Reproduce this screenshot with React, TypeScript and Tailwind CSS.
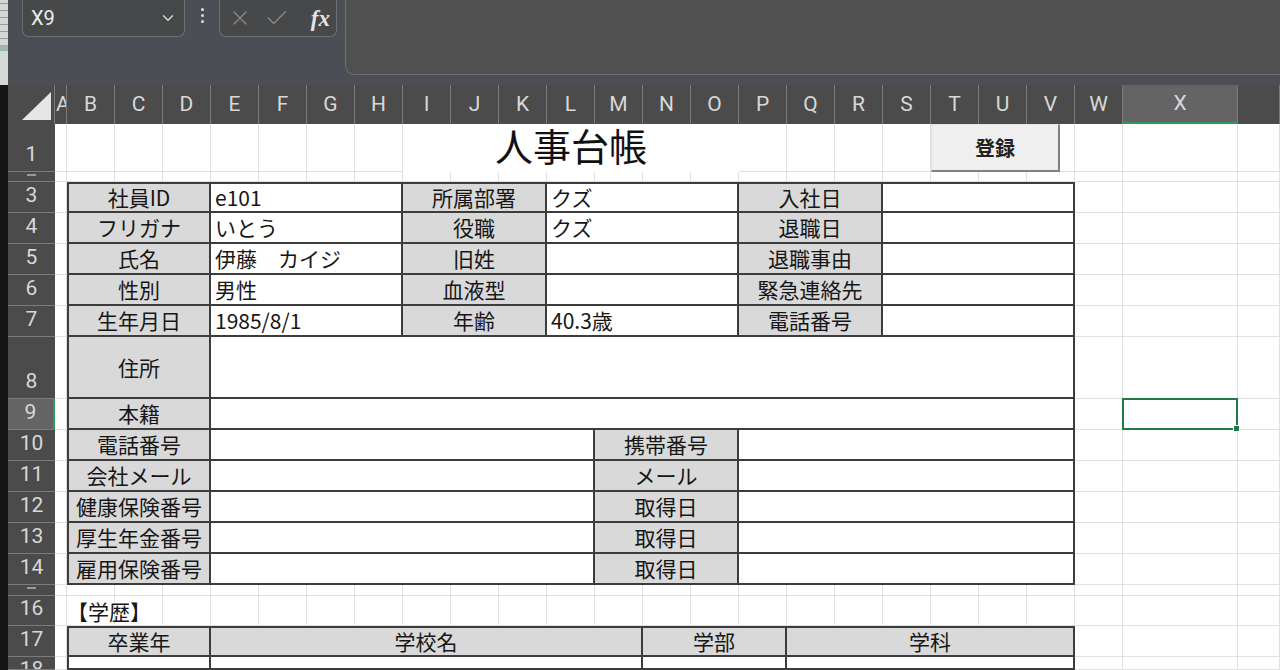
import React from 'react';
import { X, Check, ChevronDown } from 'lucide-react';

// column letters, grid column index = position + 2 (column 1 is the row header)
const COLS = ['A', 'B', 'C', 'D', 'E', 'F', 'G', 'H', 'I', 'J', 'K', 'L', 'M', 'N', 'O', 'P', 'Q', 'R', 'S', 'T', 'U', 'V', 'W', 'X', ''];
const ROWS = Array.from({ length: 18 }, (_, i) => i + 1);

type Cell = { r: number; c: number; span: number; text?: string; label?: boolean };

const topRows = [
    ['社員ID', 'e101', '所属部署', 'クズ', '入社日', ''],
    ['フリガナ', 'いとう', '役職', 'クズ', '退職日', ''],
    ['氏名', '伊藤　カイジ', '旧姓', '', '退職事由', ''],
    ['性別', '男性', '血液型', '', '緊急連絡先', ''],
    ['生年月日', '1985/8/1', '年齢', '40.3歳', '電話番号', ''],
];

const contactRows = [
    ['電話番号', '携帯番号'],
    ['会社メール', 'メール'],
    ['健康保険番号', '取得日'],
    ['厚生年金番号', '取得日'],
    ['雇用保険番号', '取得日'],
];

const buildCells = (): Cell[] => {
    const cells: Cell[] = [];
    topRows.forEach((row, i) => {
        const r = 3 + i;
        cells.push({ r, c: 3, span: 3, text: row[0], label: true });
        cells.push({ r, c: 6, span: 4, text: row[1] });
        cells.push({ r, c: 10, span: 3, text: row[2], label: true });
        cells.push({ r, c: 13, span: 4, text: row[3] });
        cells.push({ r, c: 17, span: 3, text: row[4], label: true });
        cells.push({ r, c: 20, span: 4, text: row[5] });
    });
    cells.push({ r: 8, c: 3, span: 3, text: '住所', label: true });
    cells.push({ r: 8, c: 6, span: 18 });
    cells.push({ r: 9, c: 3, span: 3, text: '本籍', label: true });
    cells.push({ r: 9, c: 6, span: 18 });
    contactRows.forEach((row, i) => {
        const r = 10 + i;
        cells.push({ r, c: 3, span: 3, text: row[0], label: true });
        cells.push({ r, c: 6, span: 8 });
        cells.push({ r, c: 14, span: 3, text: row[1], label: true });
        cells.push({ r, c: 17, span: 7 });
    });
    // 学歴 table
    cells.push({ r: 17, c: 3, span: 3, text: '卒業年', label: true });
    cells.push({ r: 17, c: 6, span: 9, text: '学校名', label: true });
    cells.push({ r: 17, c: 15, span: 3, text: '学部', label: true });
    cells.push({ r: 17, c: 18, span: 6, text: '学科', label: true });
    cells.push({ r: 18, c: 3, span: 3 });
    cells.push({ r: 18, c: 6, span: 9 });
    cells.push({ r: 18, c: 15, span: 3 });
    cells.push({ r: 18, c: 18, span: 6 });
    return cells;
};

const cells = buildCells();

const Toolbar: React.FC = () => (
    <div className="flex h-[85px] shrink-0 items-start bg-[#4b4e54]">
        {/* Name box */}
        <div className="ml-[14px] flex h-[37px] w-[163px] items-center justify-between rounded-b-[7px] border border-t-0 border-[#6d6f73] bg-[#47484a] pl-[8px] pr-[7px]">
            <span className="font-['Roboto',sans-serif] text-[20px] text-[#ededed]">X9</span>
            <ChevronDown size={18} strokeWidth={1.6} className="text-[#e2e2e2]" />
        </div>
        {/* more dots */}
        <div className="flex h-[30px] w-[34px] flex-col items-center justify-center gap-[3px]">
            <span className="h-[3px] w-[3px] rounded-full bg-[#dcdcdc]" />
            <span className="h-[3px] w-[3px] rounded-full bg-[#dcdcdc]" />
            <span className="h-[3px] w-[3px] rounded-full bg-[#dcdcdc]" />
        </div>
        {/* cancel / enter / fx */}
        <div className="flex h-[37px] w-[118px] items-center rounded-b-[7px] border border-t-0 border-[#6d6f73] bg-[#47484a] pl-[8px] pr-[6px]">
            <X size={24} strokeWidth={1.2} className="text-[#8c8c8c]" />
            <Check size={26} strokeWidth={1.2} className="ml-[12px] text-[#8c8c8c]" />
            <span className="ml-auto font-['Liberation_Serif',serif] text-[23px] font-semibold italic leading-none text-[#e4e4e4]">fx</span>
        </div>
        {/* formula input */}
        <div className="ml-[8px] h-[75px] flex-1 rounded-bl-[9px] border-b border-l border-[#6d6f73] bg-[#505050]" />
    </div>
);

const Sheet: React.FC = () => (
    <div className="grid min-h-0 flex-1 grid-cols-[47px_12px_repeat(22,48px)_115px_1fr] grid-rows-[39px_48px_10px_repeat(5,31px)_62px_repeat(6,31px)_11px_30px_31px_1fr] overflow-hidden bg-white font-['Noto_Sans_CJK_JP',sans-serif] text-[21px] text-[#161616]">
        {/* select all corner */}
        <div className="col-start-1 row-start-1 flex items-end justify-end border-r border-[#7b7b7b] bg-[#4b4b4b] pb-[4px] pr-[3px]">
            <svg width="29" height="28" viewBox="0 0 29 28">
                <polygon points="0,28 29,28 29,0" fill="#e6e6e6" />
            </svg>
        </div>

        {/* column headers */}
        {COLS.map((l, i) => (
            <div
                key={i}
                style={{ gridColumn: i + 2, gridRow: 1 }}
                className={`flex items-center overflow-hidden border-r border-[#7b7b7b] font-['Roboto',sans-serif] text-[21px] text-[#d8d8d8] ${l === 'A' ? 'justify-start pl-[1px]' : 'justify-center'} ${l === 'X' ? 'border-b-2 border-b-[#2e9a5a] bg-[#646464]' : 'bg-[#4b4b4b]'}`}
            >
                {l}
            </div>
        ))}

        {/* row headers */}
        {ROWS.map((r) => (
            <div
                key={r}
                style={{ gridColumn: 1, gridRow: r + 1 }}
                className={`flex justify-center overflow-hidden border-b border-[#7b7b7b] font-['Roboto',sans-serif] text-[21px] leading-none text-[#d8d8d8] ${r === 9 ? 'border-r-2 border-r-[#2e9a5a] bg-[#646464]' : 'bg-[#4b4b4b]'} ${r === 2 || r === 15 || r === 18 ? 'items-start pt-[2px]' : 'items-end pb-[6px]'}`}
            >
                {r === 2 || r === 15 ? <span className="h-[2px] w-[9px] bg-[#9a9a9a]" /> : r}
            </div>
        ))}

        {/* base grid lines */}
        {ROWS.map((r) =>
            COLS.map((_, i) => (
                <div
                    key={`${i}-${r}`}
                    style={{ gridColumn: i + 2, gridRow: r + 1 }}
                    className="border-b border-r border-[#e0e0e0]"
                />
            ))
        )}

        {/* title */}
        <div className="col-start-10 col-span-7 row-start-2 flex items-center justify-center bg-white pb-[6px] text-[38px] leading-none text-[#111]">
            人事台帳
        </div>

        {/* register button */}
        <div className="col-start-21 col-span-3 row-start-2 flex w-[129px] items-center justify-center border-b-2 border-l border-r-2 border-t border-b-[#808080] border-l-[#dedede] border-r-[#808080] border-t-[#e4e4e4] bg-[#efefef] text-[20px] font-bold text-[#222]">
            登録
        </div>

        {/* form cells */}
        {cells.map((c) => (
            <div
                key={`${c.r}-${c.c}`}
                style={{ gridRow: c.r + 1, gridColumn: `${c.c} / span ${c.span}` }}
                className={`flex items-center overflow-hidden whitespace-nowrap border-b-2 border-r-2 border-[#3c3c3c] leading-none ${c.label ? 'justify-center bg-[#d9d9d9]' : 'bg-white pl-[4px]'} ${c.c === 3 ? 'border-l-2' : ''} ${c.r === 3 || c.r === 17 ? 'border-t-2' : ''}`}
            >
                {c.text}
            </div>
        ))}

        {/* section caption */}
        <div className="col-start-3 col-span-5 row-start-17 flex items-center whitespace-nowrap leading-none">
            【学歴】
        </div>

        {/* selected cell X9 */}
        <div className="relative col-start-25 row-start-10 -ml-px -mt-px border-2 border-[#1f7a45]">
            <span className="absolute -bottom-[4px] -right-[4px] h-[7px] w-[7px] border border-white bg-[#1f7a45]" />
        </div>
    </div>
);

const App: React.FC = () => {
    return (
        <div className="flex h-[670px] w-[1280px] overflow-hidden bg-white">
            {/* sliver of the window behind */}
            <div className="flex w-[8px] shrink-0 flex-col">
                <div className="flex h-[85px] flex-col gap-[6px] bg-[#d4d8d6] pt-[3px]">
                    <span className="h-px bg-[#9a9a9a]" />
                    <span className="h-px bg-[#9a9a9a]" />
                    <span className="h-px bg-[#9a9a9a]" />
                    <span className="h-px bg-[#9a9a9a]" />
                    <span className="h-px bg-[#9a9a9a]" />
                    <span className="h-px bg-[#9a9a9a]" />
                    <span className="h-[6px] bg-[#9fb8a6]" />
                </div>
                <div className="flex-1 bg-[#151515]" />
            </div>

            <div className="flex min-w-0 flex-1 flex-col">
                <Toolbar />
                <Sheet />
            </div>
        </div>
    );
};

export default App;
